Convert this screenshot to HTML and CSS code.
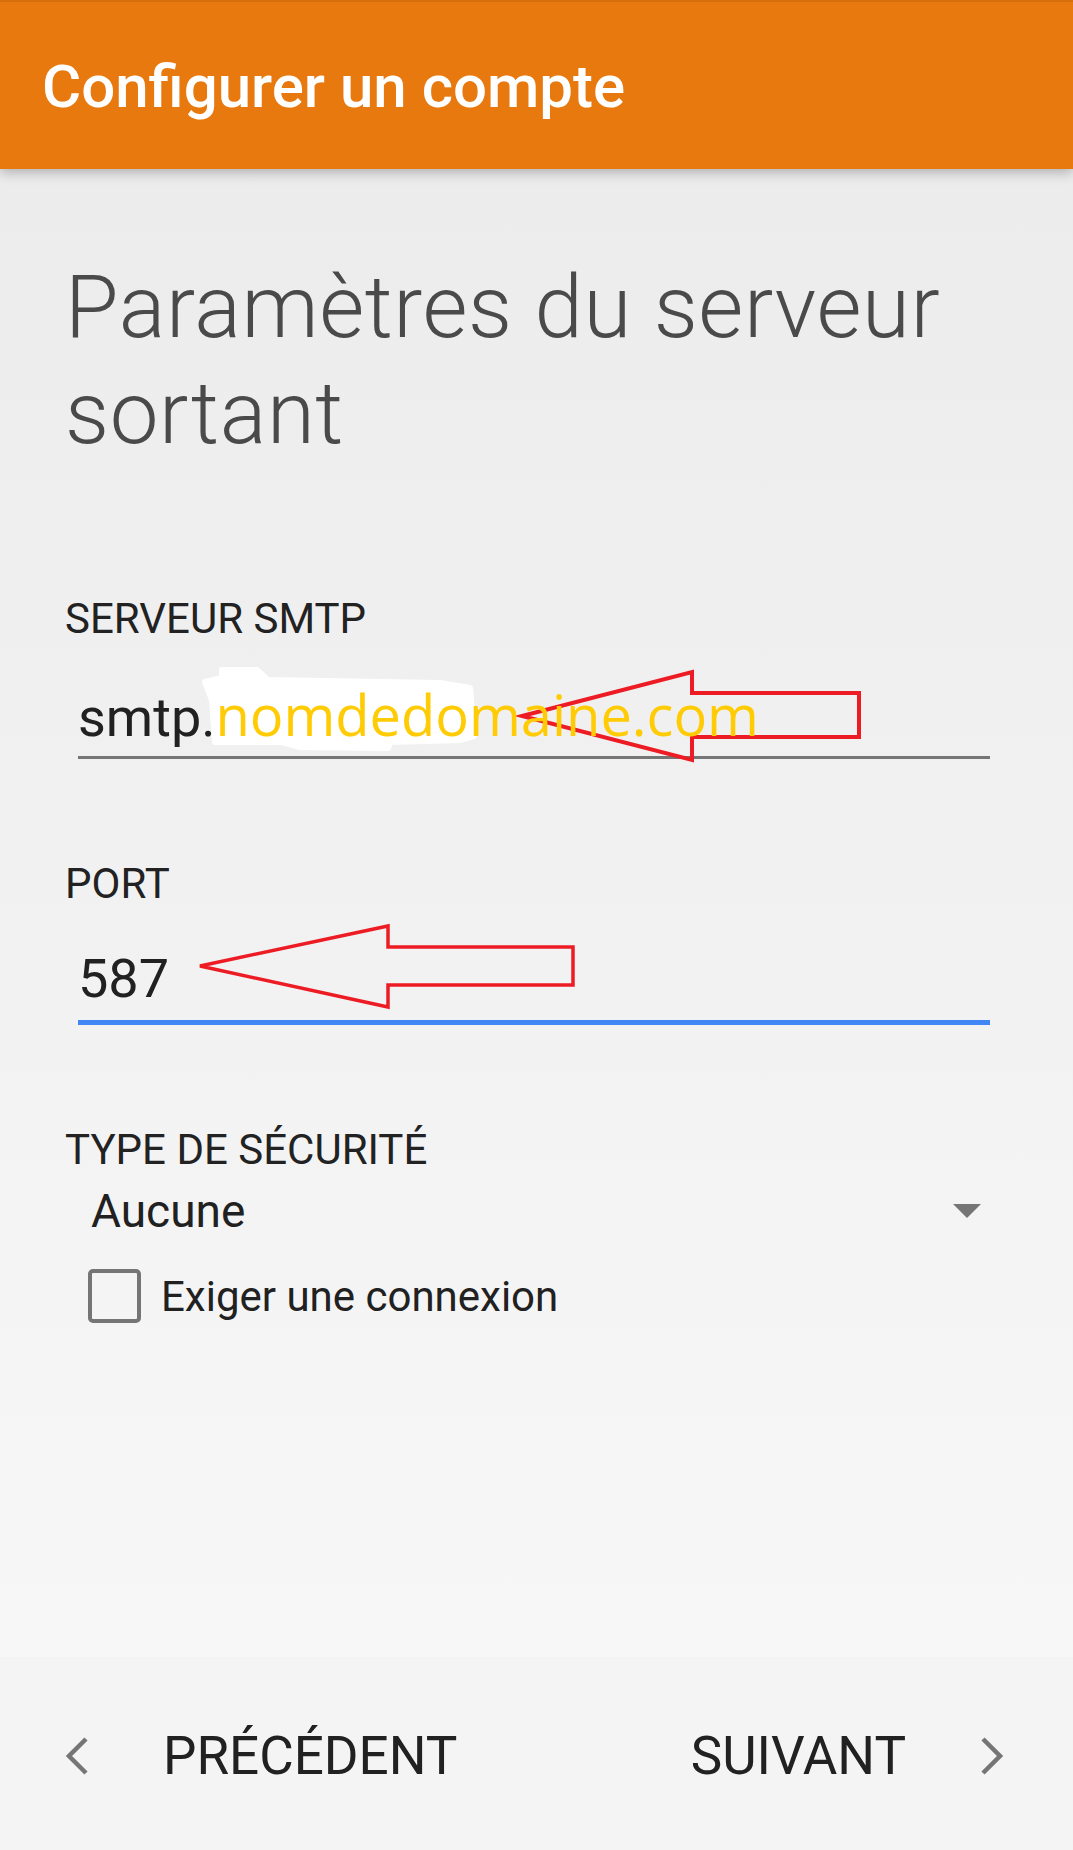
FILE: index.html
```html
<!DOCTYPE html>
<html lang="fr">
<head>
  <meta charset="UTF-8" />
  <title>Configurer un compte</title>
  <meta name="viewport" content="width=device-width, initial-scale=1.0" />
  <link rel="stylesheet" href="styles.css">
</head>
<body>
  <header class="appbar">
    <h1>Configurer un compte</h1>
  </header>

  <main class="content">
    <h2 class="page-title">Paramètres du serveur sortant</h2>

    <label class="field-label">SERVEUR SMTP</label>
    <div class="field">
      <!-- annotations laid over the screenshot -->
      <svg class="mark" width="800" height="100" viewBox="0 -20 800 100">
        <path class="blot" d="M127,1 L144,-3 L144,-11 L179,-11 L190,-1 L362,2 L392,7 L396,55 L382,59 L312,61 L310,67 L222,66 L204,61 L137,61 L134,19 Z" />
        <polygon class="arrow" points="444,35 614,-9 614,12 781,12 781,56 614,56 614,79" />
      </svg>
      <span class="field-value">smtp.<span class="domain">nomdedomaine.com</span></span>
    </div>

    <label class="field-label">PORT</label>
    <div class="field focused">
      <svg class="mark" width="520" height="100" viewBox="0 -25 520 100">
        <polygon class="arrow thin" points="122,20 310,-20 310,1 495,1 495,39 310,39 310,61" />
      </svg>
      <span class="field-value">587</span>
    </div>

    <label class="field-label tight">TYPE DE SÉCURITÉ</label>
    <div class="select-row">
      <span>Aucune</span>
      <svg class="caret" width="28" height="14" viewBox="0 0 28 14"><polygon points="0,0 28,0 14,14" /></svg>
    </div>

    <div class="check-row">
      <span class="checkbox"></span>
      <span>Exiger une connexion</span>
    </div>
  </main>

  <footer class="nav-bar">
    <div class="nav-btn">
      <svg class="chevron" width="24" height="38" viewBox="0 0 24 38"><polyline points="21,2 4,19 21,36" /></svg>
      <span>PRÉCÉDENT</span>
    </div>
    <div class="nav-btn">
      <span>SUIVANT</span>
      <svg class="chevron" width="24" height="38" viewBox="0 0 24 38"><polyline points="3,2 20,19 3,36" /></svg>
    </div>
  </footer>
</body>
</html>
```

FILE: styles.css
```css
* {
  box-sizing: border-box;
  margin: 0;
  padding: 0;
}

body {
  width: 1073px;
  height: 1850px;
  display: flex;
  flex-direction: column;
  font-family: Roboto, 'Noto Sans', sans-serif;
  color: #212121;
  background-color: #f4f4f4;
  overflow: hidden;
}

.appbar {
  height: 169px;
  flex-shrink: 0;
  display: flex;
  align-items: center;
  padding-left: 42px;
  background-color: #e8790e;
  border-top: 2px solid #d56e0b;
  box-shadow: 0 3px 12px rgba(0, 0, 0, 0.28);
  position: relative;
  z-index: 2;
}

.appbar h1 {
  font-size: 60px;
  font-weight: 500;
  color: #fff;
  margin-top: 2px;
}

.content {
  flex: 1;
  padding: 0 83px 0 65px;
  background: linear-gradient(#ececec, #f7f7f7);
}

.page-title {
  margin-top: 85px;
  font-size: 87px;
  line-height: 106px;
  font-weight: 300;
  letter-spacing: 0.6px;
  color: #4a4a4a;
  margin-bottom: 128px;
}

.field-label {
  display: block;
  font-size: 42px;
  line-height: 50px;
  color: #222;
  margin-bottom: 37px;
}

.field-label.tight {
  margin-bottom: 8px;
}

.field {
  position: relative;
  margin-left: 13px;
  padding: 0 0 5px 0;
  font-size: 54px;
  line-height: 66px;
  border-bottom: 3px solid #757575;
  margin-bottom: 100px;
}

.field.focused {
  padding-bottom: 8px;
  border-bottom: 5px solid #4285f4;
}

.field-value {
  position: relative;
}

.domain {
  font-family: 'Open Sans', sans-serif;
  font-size: 56px;
  color: #ffcb05;
}

.mark {
  position: absolute;
  left: 0;
  top: -20px;
  overflow: visible;
}

.field.focused .mark {
  top: -25px;
}

.blot {
  fill: #fff;
  stroke: #fff;
  stroke-width: 6;
  stroke-linejoin: round;
}

.arrow {
  fill: none;
  stroke: #ed1c24;
  stroke-width: 4;
}

.arrow.thin {
  stroke-width: 3.5;
}

.select-row {
  margin: 0 9px 0 13px;
  padding-left: 13px;
  height: 56px;
  display: flex;
  align-items: center;
  justify-content: space-between;
  font-size: 46px;
}

.caret polygon {
  fill: #757575;
}

.check-row {
  margin: 30px 0 0 23px;
  display: flex;
  align-items: center;
  gap: 20px;
  font-size: 42px;
}

.checkbox {
  width: 53px;
  height: 54px;
  border: 4px solid #757575;
  border-radius: 5px;
}

.nav-bar {
  height: 193px;
  flex-shrink: 0;
  display: flex;
  align-items: center;
  justify-content: space-between;
  padding: 4px 69px 0 65px;
  background-color: #f4f4f4;
  font-size: 53px;
}

.nav-btn {
  display: flex;
  align-items: center;
  gap: 74px;
}

.chevron polyline {
  fill: none;
  stroke: #757575;
  stroke-width: 4.5;
}
```
